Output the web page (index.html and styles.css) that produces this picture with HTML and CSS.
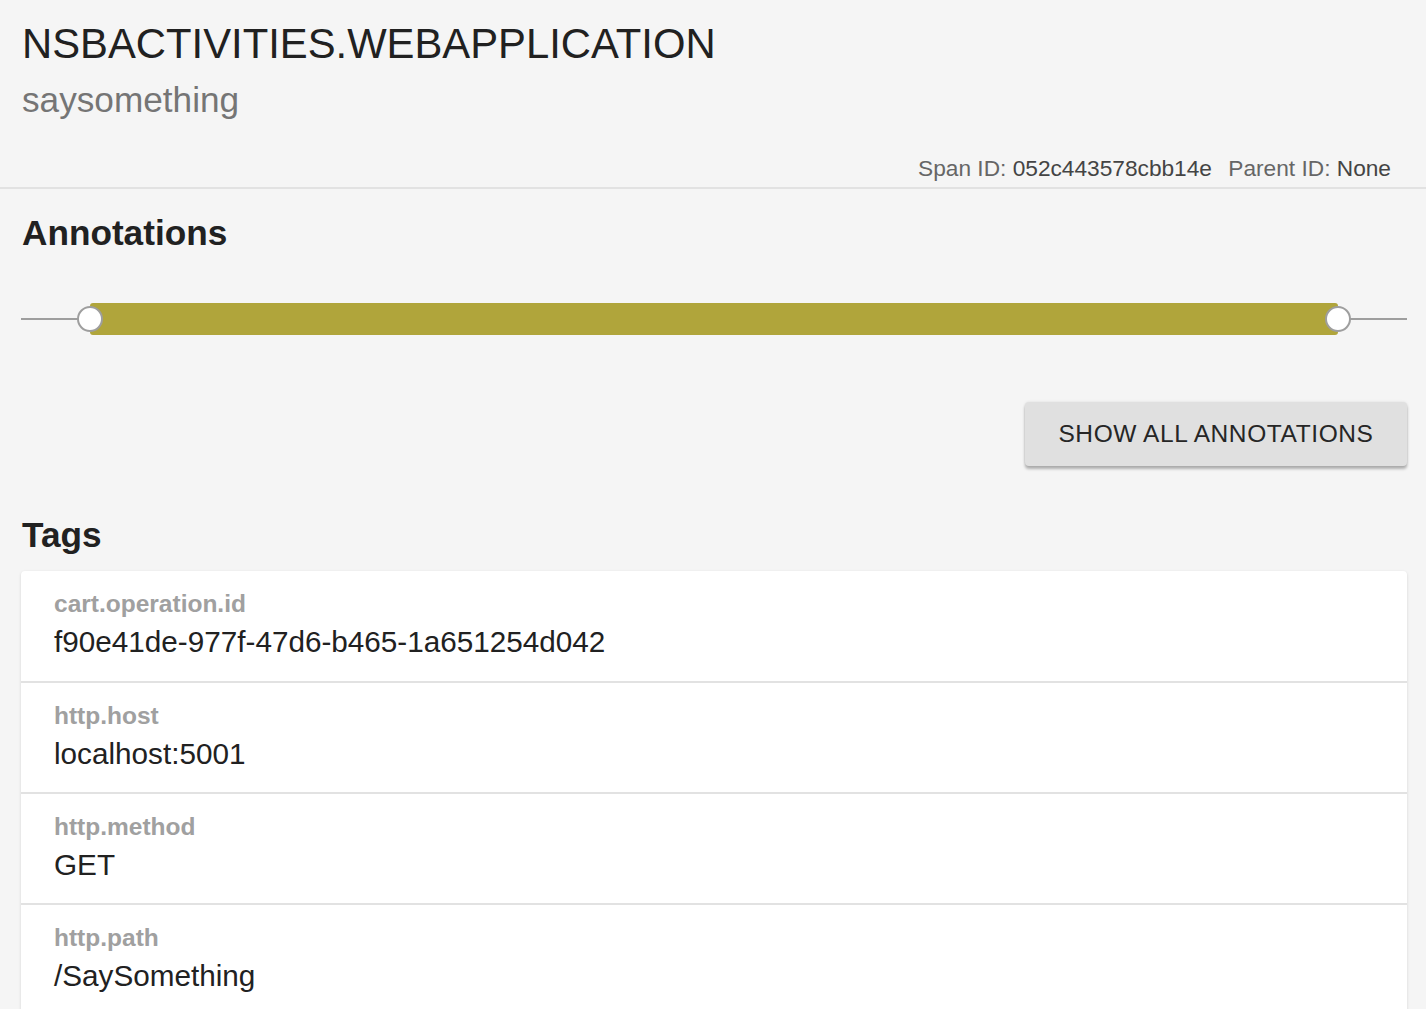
FILE: index.html
```html
<!DOCTYPE html>
<html>
<head>
<meta charset="utf-8">
<link rel="stylesheet" href="styles.css">
</head>
<body>
<header class="header">
  <h1 class="title">NSBACTIVITIES.WEBAPPLICATION</h1>
  <div class="subtitle">saysomething</div>
  <div class="ids">
    <span class="id-label">Span ID:</span> <span class="id-value">052c443578cbb14e</span>
    <span class="id-label id-gap">Parent ID:</span> <span class="id-value">None</span>
  </div>
</header>
<main class="content">
  <h2 class="section-title">Annotations</h2>
  <div class="timeline">
    <div class="timeline-line"></div>
    <div class="timeline-bar"></div>
    <div class="knob knob-left"></div>
    <div class="knob knob-right"></div>
  </div>
  <div class="actions">
    <button class="btn">SHOW ALL ANNOTATIONS</button>
  </div>
  <h2 class="section-title tags-title">Tags</h2>
  <div class="card">
    <div class="tag-row">
      <div class="tag-key">cart.operation.id</div>
      <div class="tag-value">f90e41de-977f-47d6-b465-1a651254d042</div>
    </div>
    <div class="tag-row">
      <div class="tag-key">http.host</div>
      <div class="tag-value">localhost:5001</div>
    </div>
    <div class="tag-row">
      <div class="tag-key">http.method</div>
      <div class="tag-value">GET</div>
    </div>
    <div class="tag-row">
      <div class="tag-key">http.path</div>
      <div class="tag-value">/SaySomething</div>
    </div>
  </div>
</main>
</body>
</html>
```
FILE: styles.css
```css
* { box-sizing: border-box; }
html, body { margin: 0; padding: 0; }
body {
  background: #f5f5f5;
  font-family: "Liberation Sans", Arial, sans-serif;
  color: #212121;
  overflow: hidden;
}
.header {
  border-bottom: 2px solid #e2e2e2;
  padding: 15px 35px 5px 22px;
}
.title {
  margin: 0;
  font-weight: 400;
  font-size: 41.8px;
  line-height: 58px;
  color: #212121;
}
.subtitle {
  font-size: 35.2px;
  line-height: 44px;
  margin-top: 5px;
  color: #757575;
}
.ids {
  text-align: right;
  font-size: 22.7px;
  line-height: 28px;
  margin-top: 32px;
  color: #666666;
}
.id-value { color: #444444; }
.id-gap { margin-left: 10px; }
.content {
  padding: 0 19px 0 21px;
}
.section-title {
  margin: 0;
  font-size: 35.2px;
  font-weight: 700;
  line-height: 44px;
  padding-top: 22px;
  padding-left: 1px;
  color: #212121;
}
.timeline {
  position: relative;
  height: 32px;
  margin-top: 48px;
}
.timeline-line {
  position: absolute;
  left: 0; right: 0;
  top: 15px;
  height: 2px;
  background: #9e9e9e;
}
.timeline-bar {
  position: absolute;
  left: 69px;
  right: 69px;
  top: 0;
  height: 32px;
  background: #b0a53b;
  border-radius: 3px;
}
.knob {
  position: absolute;
  top: 3px;
  width: 26px;
  height: 26px;
  border-radius: 50%;
  background: #fff;
  border: 2px solid #9e9e9e;
}
.knob-left { left: 56px; }
.knob-right { right: 56px; }
.actions {
  display: flex;
  justify-content: flex-end;
  margin-top: 67px;
}
.btn {
  width: 382px;
  height: 64px;
  border: none;
  border-radius: 4px;
  background: #e0e0e0;
  box-shadow: 0 3px 3px rgba(0,0,0,0.28), 0 0 3px rgba(0,0,0,0.10);
  font-family: "Liberation Sans", Arial, sans-serif;
  font-size: 24.5px;
  letter-spacing: 0.6px;
  color: #262626;
  padding: 0;
}
.tags-title { padding-top: 47px; }
.card {
  margin-top: 14px;
  background: #fff;
  border-radius: 4px;
  box-shadow: 0 1px 3px rgba(0,0,0,0.14);
}
.tag-row {
  height: 111px;
  padding: 16px 33px 0;
  border-bottom: 2px solid #e2e2e2;
}
.tag-row:first-child { height: 112px; }
.tag-key {
  font-size: 24.5px;
  font-weight: 700;
  color: #a0a0a0;
  line-height: 34px;
}
.tag-value {
  font-size: 29.7px;
  line-height: 42px;
  color: #212121;
}
```
